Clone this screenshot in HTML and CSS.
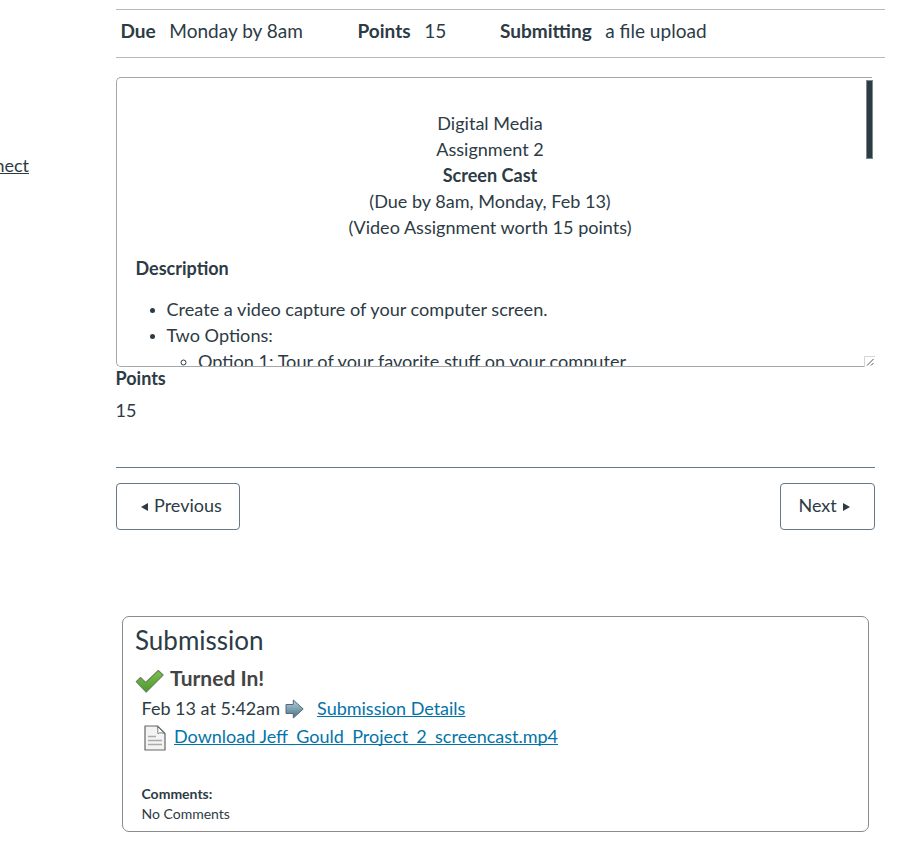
FILE: index.html
```html
<!DOCTYPE html>
<html lang="en">
<head>
<meta charset="utf-8">
<title>Assignment 2</title>
<link rel="stylesheet" href="styles.css">
</head>
<body>
<div class="page">
  <nav class="side"><a href="#">Connect</a></nav>
  <main class="main">
    <ul class="details">
      <li class="due"><b>Due</b><span>Monday by 8am</span></li>
      <li class="pts"><b>Points</b><span>15</span></li>
      <li><b>Submitting</b><span>a file upload</span></li>
    </ul>
    <section class="box">
      <div class="content">
        <p class="center">Digital Media<br>Assignment 2<br><b>Screen Cast</b><br>(Due by 8am, Monday, Feb 13)<br>(Video Assignment worth 15 points)</p>
        <p class="desc"><b>Description</b></p>
        <ul class="list">
          <li>Create a video capture of your computer screen.</li>
          <li>Two Options:
            <ul><li>Option 1: Tour of your favorite stuff on your computer</li></ul>
          </li>
        </ul>
      </div>
      <div class="track">
        <div class="thumb"></div>
        <svg class="grip" width="11" height="11" viewBox="0 0 11 11"><path d="M.5 11V.5H11" fill="none" stroke="#d5d5d5"/><path d="M3 9.5L9.5 3M7 9.5L9.5 7" stroke="#555" stroke-width="1"/></svg>
      </div>
    </section>
    <div class="points"><b>Points</b><span>15</span></div>
    <footer class="nav">
      <a class="btn prev"><svg width="7" height="8" viewBox="0 0 7 8"><path d="M7 0v8L0 4z" fill="#2d3b45"/></svg><span>Previous</span></a>
      <a class="btn next"><span>Next</span><svg width="7" height="8" viewBox="0 0 7 8"><path d="M0 0v8l7-4z" fill="#2d3b45"/></svg></a>
    </footer>
    <section class="submission">
      <h2>Submission</h2>
      <div class="turned">
        <svg width="29" height="24" viewBox="0 0 29 24"><defs><linearGradient id="g" x2="0" y2="1"><stop stop-color="#7cc04b"/><stop offset="1" stop-color="#4b9b2e"/></linearGradient></defs><path d="M1.2 12.7L5.5 8.5l5.2 5L23.3 1.5l4.8 4.5L11.2 23.2z" fill="url(#g)" stroke="#6b8560" stroke-width="1.1" stroke-linejoin="round"/></svg>
        <strong>Turned In!</strong>
      </div>
      <div class="row date"><span>Feb 13 at 5:42am</span>
        <svg width="19" height="20" viewBox="0 0 19 20"><defs><linearGradient id="a" x2="0" y2="1"><stop stop-color="#b8d2dd"/><stop offset="1" stop-color="#466e85"/></linearGradient></defs><path d="M1 5.5h7.3V1l9.9 9-9.9 9v-4.500H1z" fill="url(#a)" stroke="#536b78" stroke-linejoin="round"/></svg>
        <a href="#">Submission Details</a></div>
      <div class="row file">
        <svg width="22" height="26" viewBox="0 0 22 26"><path d="M1 1h12.5L21 8.5V25H1z" fill="#f3f3f3" stroke="#666" stroke-width="1.2" stroke-linejoin="round"/><path d="M13 1c1.5 2 .5 7 .8 7.5C16 7.5 19 7.5 21 9z" fill="#fff" stroke="#777" stroke-linejoin="round"/><path d="M4 11.5h8M4 15.5h14M4 19.5h14" stroke="#aaa" stroke-width="1.5"/></svg>
        <a href="#">Download Jeff_Gould_Project_2_screencast.mp4</a></div>
      <div class="comments"><b>Comments:</b><span>No Comments</span></div>
    </section>
  </main>
</div>
</body>
</html>
```
FILE: styles.css
```css
* { box-sizing: border-box; }
body { margin: 0; background: #fff; color: #2d3b45; font: 18px/26px Lato, sans-serif; overflow: hidden; }
p, ul, h2 { margin: 0; padding: 0; }
.page { display: flex; height: 860px; }
.side { width: 116px; flex: none; padding-top: 152px; display: flex; align-items: flex-start; }
.side a { color: inherit; text-underline-offset: 1px; width: 29px; direction: rtl; white-space: nowrap; }
.main { width: 769px; padding-top: 9px; }
.details { display: flex; list-style: none; height: 49px; border: solid #b5b9bd; border-width: 1px 0; padding: 8px 0 0 4.5px; font-size: 19.05px; }
.details li { display: flex; gap: 13.5px; }
.due { width: 237px; }
.pts { width: 142.5px; }
.box { margin-top: 19px; width: 759px; height: 290px; display: flex; }
.content { width: 756px; flex: none; height: 290px; border: 1px solid #a5a8aa; border-right: 0; border-radius: 5px 0 0 5px; padding: 32px 27.5px 0 18.5px; overflow: hidden; }
.center { text-align: center; font-size: 18.06px; }
.desc { margin-top: 15px; }
.list { margin: 15px 0 0; padding-left: 31px; font-size: 18.12px; }
.list ul { padding-left: 31.5px; }
.list li::marker { font-size: 15px; }
.track { margin-left: -6px; width: 11px; flex: none; display: flex; flex-direction: column; justify-content: space-between; padding-top: 3px; }
.thumb { width: 7px; height: 79px; background: #2d3b45; border: 1px solid #7f898f; }
.grip { display: block; margin-left: -2px; background: #fff; }
.points { height: 102px; margin: -2px 0 0 -0.5px; display: flex; flex-direction: column; gap: 6px; }
.nav { width: 759px; border-top: 1px solid #66788a; padding-top: 15px; display: flex; justify-content: space-between; }
.btn { height: 47px; border: 1px solid #66788a; border-radius: 4px; display: flex; align-items: center; gap: 6.5px; }
.btn span { margin-top: -4px; }
.prev { width: 124px; padding-left: 23.5px; }
.next { width: 95px; padding-left: 17.5px; }
.submission { margin: 86px 0 0 6px; width: 747px; height: 216px; border: 1px solid #8b8b8b; border-radius: 7px; padding: 7px 12px; }
h2 { font-weight: 400; font-size: 26px; line-height: 32px; }
.turned { display: flex; gap: 6px; height: 38px; padding-top: 13px; }
.turned strong { color: #444; font-size: 21px; line-height: 20px; margin-top: -1px; }
.row { display: flex; align-items: center; height: 28px; padding-left: 6.5px; }
.row a { color: #0374a8; text-underline-offset: 1px; text-decoration-skip-ink: none; }
.date svg { margin: 2px 13px 0 5px; }
.file svg { margin: 3px 8.5px 0 2px; }
.comments { margin-top: 34px; padding-left: 6.5px; display: flex; flex-direction: column; font-size: 14px; line-height: 20px; }
```
